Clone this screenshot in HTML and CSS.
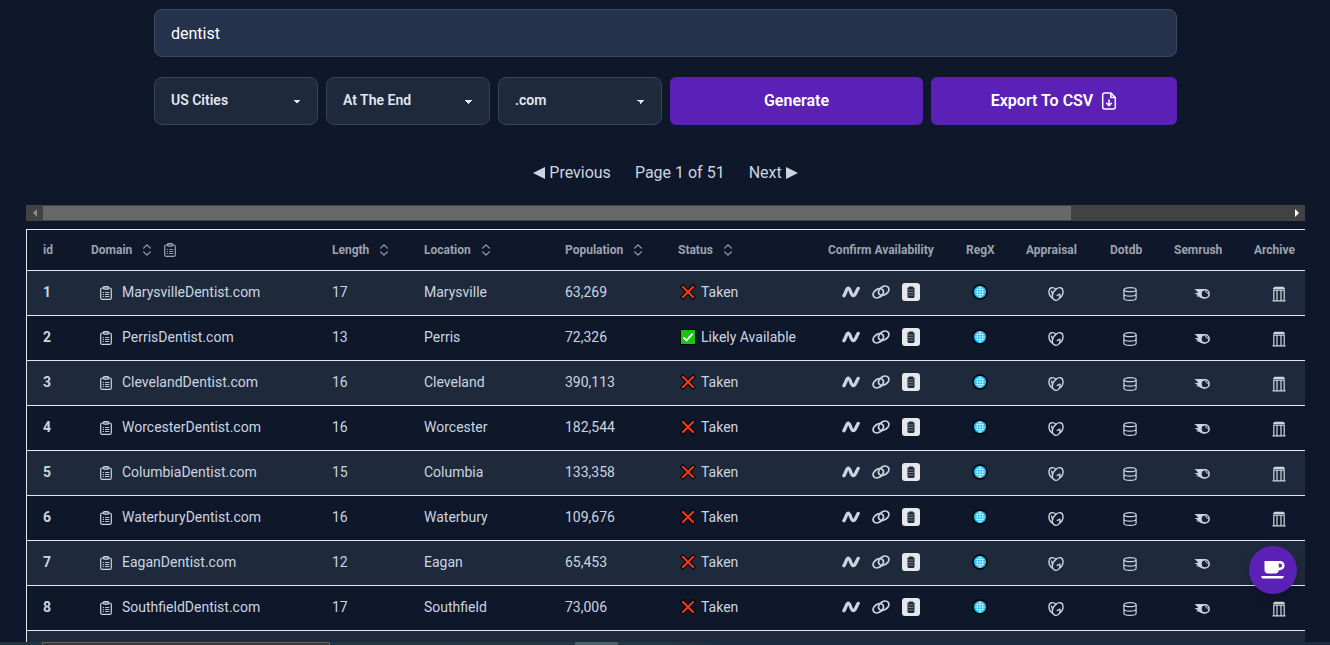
FILE: index.html
```html
<!DOCTYPE html>
<html lang="en">
<head>
<meta charset="utf-8">
<meta name="viewport" content="width=device-width, initial-scale=1">
<title>Domain Generator</title>
<link rel="stylesheet" href="styles.css">
</head>
<body>
<svg class="sprite" aria-hidden="true">
  <symbol id="clipboard" viewBox="0 0 12 14"><rect x="0.7" y="2" width="10.6" height="11.4" rx="1.6" fill="none" stroke="currentColor" stroke-width="1.2"/><rect x="3.2" y="0.6" width="5.6" height="2.6" rx="1.2" fill="none" stroke="currentColor" stroke-width="1.1"/><path d="M2.700 6.500h1.300M2.700 8.500h1.300M2.700 10.500h1.300M5 6.500h4.300M5 8.500h4.300M5 10.500h4.300" stroke="currentColor" stroke-width="0.9"/></symbol>
  <symbol id="sort" viewBox="0 0 16 16"><path d="M4.600 6.200 8 2.800l3.400 3.400M4.600 9.800 8 13.200l3.400-3.400" fill="none" stroke="currentColor" stroke-width="1.200" stroke-linecap="round" stroke-linejoin="round"/></symbol>
  <symbol id="cross" viewBox="0 0 16 16"><path d="M3 3l10 10M13 3L3 13" stroke="#000" stroke-width="4.200" stroke-linecap="square"/><path d="M3 3l10 10M13 3L3 13" stroke="#f03a17" stroke-width="2.200" stroke-linecap="square"/></symbol>
  <symbol id="check" viewBox="0 0 16 16"><rect x="0.5" y="0.5" width="15" height="15" fill="#16c60c" stroke="#000"/><path d="M3.400 8.400 6.600 11.400 12.600 4.600" fill="none" stroke="#fff" stroke-width="1.800"/></symbol>
  <symbol id="wave" viewBox="0 0 18 18"><path d="M1.900 12.700C4 9.800 4.400 5.200 6.300 5.200c2 0 2.600 7.400 4.900 7.400 2.200 0 3-4.200 5-7.200" fill="none" stroke="currentColor" stroke-width="3.300" stroke-linecap="round"/></symbol>
  <symbol id="link" viewBox="0 0 18 18"><g fill="none" stroke="currentColor" stroke-width="1.800"><ellipse cx="6.300" cy="10.200" rx="5.600" ry="4" transform="rotate(-35 6.300 10.200)"/><ellipse cx="11.700" cy="7.800" rx="5.600" ry="4" transform="rotate(-35 11.700 7.800)"/></g></symbol>
  <symbol id="stack" viewBox="0 0 18 18"><rect width="18" height="18" rx="3" fill="#e5e7eb"/><path d="M7 3.500h4v1h1.500v9.500l-1 1h-5l-1-1V4.500H7z" fill="#1e293b"/><path d="M6 7h5.500M6 9.500h5.500M6 12h5.500" stroke="#8d94a3" stroke-width="0.8"/></symbol>
  <symbol id="globe" viewBox="0 0 16 16"><circle cx="8" cy="8" r="7" fill="#12b4f0" stroke="#000" stroke-width="1.500"/><g fill="none" stroke="#c9f3ff" stroke-width="0.9"><path d="M8 3v10M3 8h10M3.800 5.400h8.400M3.800 10.600h8.400"/><ellipse cx="8" cy="8" rx="2.800" ry="5"/></g></symbol>
  <symbol id="appraise" viewBox="0 0 16 16"><g fill="none" stroke="currentColor" stroke-width="1.400" stroke-linecap="round" stroke-linejoin="round"><path d="M4.700 12.300C2 10.800.8 7.600 1 5 1.200 1.600 4.800.4 8 3.200"/><path d="M11.300 12.300C14 10.800 15.200 7.600 15 5c-.2-3.400-3.800-4.600-7-1.800C5.200 5.600 3.700 9.200 4.600 11.900c.8 2.700 4.500 3.300 6.400 1 1-1.200 1.200-2.800.9-4.700L9.300 9.400"/><path d="M3.600 5.200c.2 1.400.6 2.200 1.200 3"/></g></symbol>
  <symbol id="database" viewBox="0 0 14 14"><g fill="none" stroke="currentColor" stroke-width="1.200"><ellipse cx="7" cy="2.700" rx="6.100" ry="2"/><path d="M.9 2.700v8.500c0 1.100 2.700 2.100 6.100 2.100s6.100-1 6.100-2.100V2.700M.9 7c0 1.100 2.700 2.100 6.100 2.100s6.100-1 6.100-2.100"/></g></symbol>
  <symbol id="comet" viewBox="0 0 16 16"><path d="M.2 3.300C4 2.900 7.500 3 11 3.100v9.600C8.500 12.700 6.500 11.800 5 10.700L1.800 9.900 4 9.200.4 7.100 4.200 7 2.600 4.700z" fill="currentColor"/><circle cx="11" cy="7.900" r="4.100" fill="#172033" stroke="currentColor" stroke-width="1.600"/><path d="M11 5.500A2.400 2.400 0 0 1 13.400 7.900" fill="none" stroke="currentColor" stroke-width="1"/></symbol>
  <symbol id="archive" viewBox="0 0 14 16"><path d="M2.500.700h9L13 2.600v.8H1v-.8zM.5 14.300h13v1.200H.5zM1.200 3.900h11.600v.9H1.200zM1.200 4.800h1.200v9.600H1.200zM4.400 4.800h1.200v9.600H4.400zM8.400 4.800h1.200v9.600H8.400zM11.600 4.800h1.200v9.600h-1.200z" fill="currentColor"/></symbol>
</svg>

<main class="page">
  <form class="search" onsubmit="return false">
    <input class="keyword" type="text" value="dentist" aria-label="Keyword">
    <div class="controls">
      <select class="picker" aria-label="Word list"><option>US Cities</option></select>
      <select class="picker" aria-label="Keyword position"><option>At The End</option></select>
      <select class="picker" aria-label="Extension"><option>.com</option></select>
      <button class="action" type="submit">Generate</button>
      <button class="action" type="button">Export To CSV
        <svg class="file-icon" viewBox="0 0 16 18" fill="none" stroke="currentColor" stroke-width="1.500" stroke-linecap="round" stroke-linejoin="round"><path d="M10 1H3.500A2 2 0 0 0 1.700 3v12a2 2 0 0 0 2 2h8.600a2 2 0 0 0 2-2V5.400zM9.800 1.200v4.400h4.400M8 8v5.200M5.600 11.200 8 13.600l2.400-2.400"/></svg>
      </button>
    </div>
  </form>

  <nav class="pager" aria-label="Pages">
    <button type="button"><svg class="arrow" viewBox="0 0 12 12"><path d="M0 6 12 0v12z" fill="currentColor"/></svg>Previous</button>
    <span>Page 1 of 51</span>
    <button type="button">Next<svg class="arrow" viewBox="0 0 12 12"><path d="M12 6 0 0v12z" fill="currentColor"/></svg></button>
  </nav>

  <section class="results">
    <div class="scrollbar">
      <button class="scroll-end dim" type="button" aria-label="Scroll left"><svg viewBox="0 0 4 8"><path d="M4 0v8L0 4z" fill="currentColor"/></svg></button>
      <div class="track"><div class="thumb"></div></div>
      <button class="scroll-end" type="button" aria-label="Scroll right"><svg viewBox="0 0 4 8"><path d="M0 0v8l4-4z" fill="currentColor"/></svg></button>
    </div>
    <div class="table-wrap">
      <table>
        <colgroup><col class="c-id"><col class="c-domain"><col class="c-length"><col class="c-location"><col class="c-population"><col class="c-status"><col class="c-confirm"><col class="c-regx"><col class="c-appraisal"><col class="c-dotdb"><col class="c-semrush"><col class="c-archive"></colgroup>
        <thead>
          <tr>
            <th>id</th>
            <th><div class="head">Domain<svg class="i16"><use href="#sort"/></svg><svg class="clip"><use href="#clipboard"/></svg></div></th>
            <th><div class="head">Length<svg class="i16"><use href="#sort"/></svg></div></th>
            <th><div class="head">Location<svg class="i16"><use href="#sort"/></svg></div></th>
            <th><div class="head">Population<svg class="i16"><use href="#sort"/></svg></div></th>
            <th><div class="head">Status<svg class="i16"><use href="#sort"/></svg></div></th>
            <th>Confirm Availability</th><th>RegX</th><th>Appraisal</th><th>Dotdb</th><th>Semrush</th><th>Archive</th>
          </tr>
        </thead>
        <tbody id="rows"></tbody>
      </table>
    </div>
  </section>
</main>

<button class="coffee" type="button" aria-label="Buy me a coffee"><svg viewBox="0 0 26 20"><path d="M4.500 1H20a4.600 4.600 0 0 1 0 9.200h-1.200A4 4 0 0 1 15 13.500H8.300a3.800 3.800 0 0 1-3.800-3.800zM18.800 3.600v4H20a2 2 0 0 0 0-4z" fill="#fff" fill-rule="evenodd"/><path d="M1 16h23l-1.200 2.400H2.200z" fill="#fff"/></svg></button>
<footer class="taskbar"><div class="task-search"></div><div class="task-active"></div></footer>
<script src="rows.js"></script>
</body>
</html>
```

FILE: styles.css
```css
* { box-sizing: border-box; }

body {
  margin: 0;
  height: 100vh;
  display: flex;
  flex-direction: column;
  overflow: hidden;
  background: #0f172a;
  color: #cbd5e1;
  font: 14px/20px Roboto, "Liberation Sans", sans-serif;
}

button, input, select { font: inherit; color: inherit; }
button { border: 0; background: none; padding: 0; cursor: pointer; }
svg { display: block; flex: none; }
.sprite { position: absolute; width: 0; height: 0; }

.page { flex: 1; min-height: 0; overflow: hidden; padding: 9px 25px 0 26px; }

.search { display: grid; gap: 20px; margin: 0 128px; }

.keyword {
  width: 100%;
  height: 48px;
  padding: 0 16px;
  border: 1px solid #3b4a60;
  border-radius: 8px;
  background: #25324b;
  color: #fff;
  font-size: 16px;
}

.controls {
  display: grid;
  grid-template-columns: 164fr 164fr 164fr 253fr 246fr;
  gap: 8px;
}

.picker {
  appearance: none;
  min-width: 0;
  height: 48px;
  padding: 0 40px 2px 16px;
  border: 1px solid #35445a;
  border-radius: 8px;
  background-color: #1e293b;
  background-image:
    linear-gradient(45deg, transparent 50%, currentColor 50%),
    linear-gradient(135deg, currentColor 50%, transparent 50%);
  background-position: calc(100% - 20px) calc(1px + 50%), calc(100% - 16px) calc(1px + 50%);
  background-size: 4px 4px;
  background-repeat: no-repeat;
  color: #e2e8f0;
  font-weight: 600;
}

.action {
  display: flex;
  align-items: center;
  justify-content: center;
  gap: 8px;
  height: 48px;
  border-radius: 6px;
  background: #5b21b6;
  color: #fff;
  font-size: 16px;
  font-weight: 600;
}
.file-icon { width: 16px; height: 18px; }

.pager {
  display: flex;
  justify-content: center;
  gap: 24px;
  margin: 36px 0 20px;
  font-size: 16px;
  line-height: 24px;
}
.pager button { display: flex; align-items: center; gap: 4px; }
.arrow { width: 12px; height: 12px; }

.scrollbar { display: flex; height: 16px; margin: 0 0 8px; background: #424242; }
.scroll-end { display: grid; place-items: center; width: 17px; color: #fff; }
.scroll-end svg { width: 4px; height: 8px; }
.scroll-end.dim { color: #8b8b8b; }
.track { flex: 1; padding: 1px 0; }
.thumb { width: 82.6%; height: 14px; background: #686868; }

.table-wrap { overflow: hidden; border: solid #e2e8f0; border-width: 1px 0 0 1px; }
table { width: 1284px; min-width: 100%; table-layout: fixed; border-spacing: 0; }
.c-id { width: 48px; }
.c-domain { width: 241px; }
.c-length { width: 92px; }
.c-location { width: 141px; }
.c-population { width: 113px; }
.c-status { width: 150px; }
.c-confirm { width: 138px; }
.c-regx { width: 60px; }
.c-appraisal { width: 84px; }
.c-dotdb { width: 64px; }
.c-semrush { width: 80px; }
.c-archive { width: 73px; }

th, td { padding: 0 16px; border-bottom: 1px solid #e2e8f0; text-align: left; white-space: nowrap; }
thead th { height: 41px; color: #9ca3af; font-size: 12px; font-weight: 700; }
td, tbody th { height: 45px; padding-bottom: 2px; }
tbody th { font-weight: 700; }
tbody tr:nth-child(odd) { background: #1e293b; }

.head { display: flex; align-items: center; gap: 7px; }
.i16 { width: 16px; height: 16px; }
.head .clip { margin-left: 2px; }
.clip { width: 12px; height: 14px; }
.domain { display: flex; align-items: center; gap: 10px; padding-left: 9px; }
.domain button { padding-top: 2px; }
.status { display: flex; align-items: center; gap: 5px; padding-left: 2px; }
.status svg { width: 16px; height: 16px; }
.icons { display: flex; justify-content: center; gap: 12px; }
.icons a, .tool { color: inherit; }
.icons svg { width: 18px; height: 18px; }
.tool { display: flex; justify-content: center; }
.tool svg { width: 16px; height: 16px; }
.tool .w14 { width: 14px; height: 14px; }
.tool.late { padding: 3px 0 0 8px; }

.coffee {
  position: fixed;
  right: 33px;
  bottom: 51px;
  display: grid;
  place-items: center;
  width: 48px;
  height: 48px;
  border-radius: 50%;
  background: #5b21b6;
  box-shadow: 0 4px 8px rgba(0, 0, 0, 0.2);
}
.coffee svg { width: 26px; height: 20px; }

.taskbar { display: flex; height: 3px; padding-left: 42px; background: linear-gradient(90deg, #20363f, #203a45 50%, #1b2942 55%, #1b2942); }
.task-search { width: 288px; border: 1px solid #63605f; border-bottom: 0; background: #3b3838; }
.task-active { width: 43px; margin-left: 245px; background: #4d5f6b; }
```

FILE: rows.js
```js
const domains = [
  ["Marysville", 17, "63,269", false],
  ["Perris", 13, "72,326", true],
  ["Cleveland", 16, "390,113", false],
  ["Worcester", 16, "182,544", false],
  ["Columbia", 15, "133,358", false],
  ["Waterbury", 16, "109,676", false],
  ["Eagan", 12, "65,453", false],
  ["Southfield", 17, "73,006", false],
];

const icon = (id, cls = "") => `<svg class="${cls}"><use href="#${id}"/></svg>`;
const tool = (id, label, cls = "") =>
  `<td><a class="tool late" href="#" aria-label="${label}">${icon(id, cls)}</a></td>`;

const rows = domains.map(([city, length, population, free], i) => `<tr>
  <th scope="row">${i + 1}</th>
  <td><div class="domain"><button type="button" aria-label="Copy">${icon("clipboard", "clip")}</button>${city}Dentist.com</div></td>
  <td>${length}</td><td>${city}</td><td>${population}</td>
  <td><div class="status">${icon(free ? "check" : "cross")}${free ? "Likely Available" : "Taken"}</div></td>
  <td><div class="icons"><a href="#" aria-label="Namecheap">${icon("wave")}</a><a href="#" aria-label="Visit">${icon("link")}</a><a href="#" aria-label="Registrar">${icon("stack")}</a></div></td>
  <td><a class="tool" href="#" aria-label="RegX">${icon("globe")}</a></td>
  ${tool("appraise", "Appraisal")}${tool("database", "Dotdb", "w14")}${tool("comet", "Semrush")}${tool("archive", "Archive")}
</tr>`);

document.getElementById("rows").innerHTML = rows.join("") + '<tr><td colspan="12"></td></tr>';
```
